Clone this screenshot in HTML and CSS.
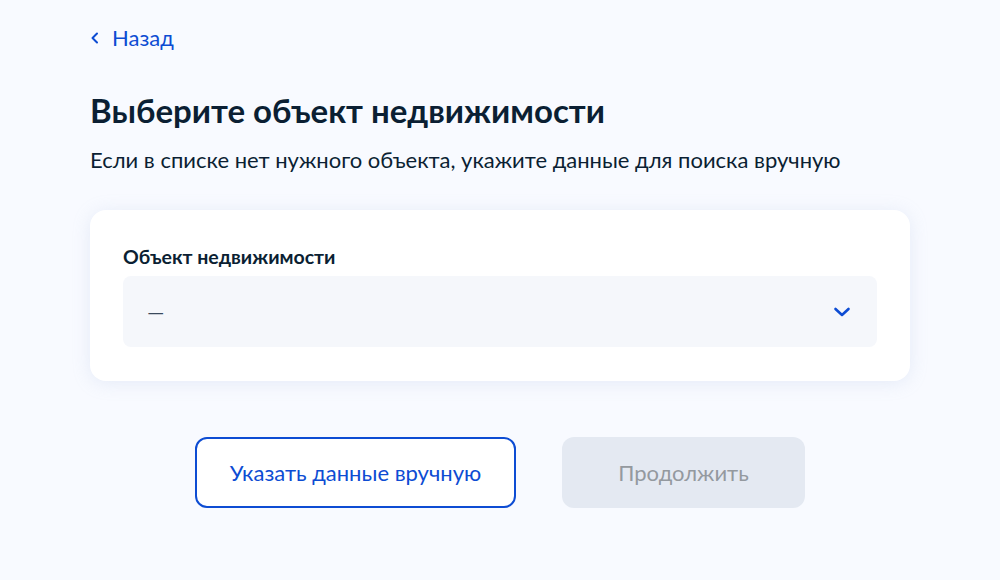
FILE: index.html
```html
<!DOCTYPE html>
<html lang="ru">
<head>
<meta charset="utf-8">
<link rel="stylesheet" href="styles.css">
</head>
<body>
<main class="page">
  <a class="back" href="#">
    <svg class="back-icon" width="10" height="14" viewBox="0 0 10 14"><path d="M7 2.5L2.5 7L7 11.5" fill="none" stroke="#0d4cd3" stroke-width="2" stroke-linecap="round" stroke-linejoin="round"/></svg>
    <span>Назад</span>
  </a>
  <h1 class="title">Выберите объект недвижимости</h1>
  <p class="subtitle">Если в списке нет нужного объекта, укажите данные для поиска вручную</p>
  <section class="card">
    <div class="label">Объект недвижимости</div>
    <div class="select">
      <span class="select-value">—</span>
      <svg class="select-icon" width="18" height="12" viewBox="0 0 18 12"><path d="M2.5 3L9 9L15.5 3" fill="none" stroke="#0d4cd3" stroke-width="2.6" stroke-linecap="round" stroke-linejoin="round"/></svg>
    </div>
  </section>
  <div class="actions">
    <button class="btn btn-outline">Указать данные вручную</button>
    <button class="btn btn-disabled">Продолжить</button>
  </div>
</main>
</body>
</html>
```
FILE: styles.css
```css
html, body {
  margin: 0;
  padding: 0;
  background: #f8faff;
}
body {
  font-family: Lato, "Noto Sans", sans-serif;
  color: #0b1f33;
  width: 1000px;
  height: 580px;
  overflow: hidden;
}
.page {
  padding: 24px 90px 0 90px;
}
.back {
  display: inline-flex;
  align-items: center;
  gap: 12px;
  color: #0d4cd3;
  text-decoration: none;
  font-size: 22px;
  line-height: 28px;
}
.back-icon {
  display: block;
}
.title {
  margin: 38px 0 0 0;
  font-size: 33px;
  line-height: 40px;
  font-weight: 700;
}
.subtitle {
  margin: 16px 0 0 0;
  font-size: 22px;
  line-height: 28px;
}
.card {
  margin-top: 36px;
  background: #ffffff;
  border-radius: 16px;
  box-shadow: 0 2px 18px rgba(165, 180, 220, 0.22);
  padding: 35px 33px 34px 33px;
}
.label {
  font-size: 19.5px;
  line-height: 24px;
  font-weight: 700;
  margin-bottom: 7px;
}
.select {
  display: flex;
  align-items: center;
  justify-content: space-between;
  height: 71px;
  background: #f5f7fb;
  border-radius: 8px;
  padding: 0 26px 0 24px;
  box-sizing: border-box;
}
.select-value {
  font-size: 22px;
  color: #3a4a5c;
}
.actions {
  display: flex;
  justify-content: center;
  gap: 46px;
  margin-top: 56px;
}
.btn {
  font-family: Lato, "Noto Sans", sans-serif;
  font-size: 22px;
  height: 71px;
  border-radius: 12px;
  box-sizing: border-box;
}
.btn-outline {
  width: 321px;
  background: #ffffff;
  border: 2px solid #0d4cd3;
  color: #0d4cd3;
}
.btn-disabled {
  width: 243px;
  background: #e4e9f2;
  border: 0;
  color: #94999f;
}
```
